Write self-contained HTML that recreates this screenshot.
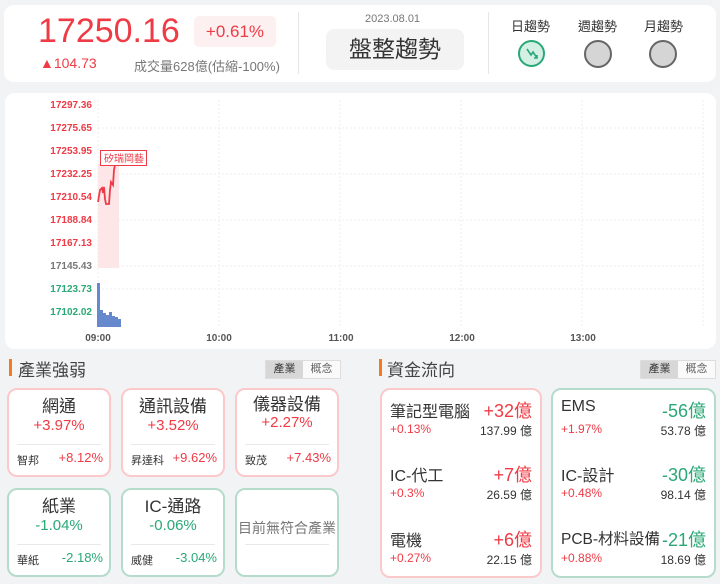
<!DOCTYPE html>
<html><head><meta charset="utf-8"><style>
*{margin:0;padding:0;box-sizing:border-box}
body{width:720px;height:584px;background:#f2f3f5;font-family:"Liberation Sans","Noto Sans CJK TC",sans-serif;position:relative;overflow:hidden;color:#333}
.a{position:absolute}
.card{position:absolute;background:#fff;border-radius:10px}
.red{color:#ef3b46}.grn{color:#2aa877}
.ic{position:absolute;background:#fff;border-radius:10px;border:2px solid #fcc9cb}
.ic.g{border-color:#b5dccb}
.ic .t{position:absolute;left:0;right:0;top:2px;text-align:center;font-size:17px;color:#333}
.ic .p{position:absolute;left:0;right:0;top:27px;text-align:center;font-size:15px}
.ic .hr{position:absolute;left:8px;right:8px;top:54px;border-top:1px solid #e8e8e8}
.ic .s{position:absolute;left:8px;top:62px;font-size:11px;color:#333}
.ic .v{position:absolute;right:6px;top:60px;font-size:13px}
.tog{position:absolute;width:76px;height:19px;border:1px solid #ddd;font-size:11px;display:flex}
.tog span{flex:1;text-align:center;line-height:17px;color:#666;background:#fafafa}
.tog span:first-child{background:#d7d7d7;color:#333}
.fc .n{position:absolute;left:8px;font-size:16px;color:#333}
.fc .m{position:absolute;right:8px;font-size:18px}
.fc .q{position:absolute;left:8px;font-size:12px;color:#ef3b46}
.fc .w{position:absolute;right:8px;font-size:12px;color:#333}
.ylab{position:absolute;left:40px;width:52px;text-align:right;font-size:10px;font-weight:bold}
</style></head><body>
<div class="card" style="left:4px;top:5px;width:712px;height:77px"></div>
<div class="a red" style="left:38px;top:12px;font-size:34px">17250.16</div>
<div class="a red" style="left:194px;top:16px;width:82px;height:31px;background:#fdf0f0;border-radius:5px;font-size:17px;text-align:center;line-height:31px">+0.61%</div>
<div class="a red" style="left:40px;top:55px;font-size:14px">▲104.73</div>
<div class="a" style="left:134px;top:56px;font-size:13px;color:#777">成交量628億(估縮-100%)</div>
<div class="a" style="left:298px;top:12px;width:1px;height:62px;background:#e6e6e6"></div>
<div class="a" style="left:365px;top:13px;font-size:11px;color:#777">2023.08.01</div>
<div class="a" style="left:326px;top:29px;width:138px;height:41px;background:#f3f3f3;border-radius:8px;font-size:23px;text-align:center;line-height:41px;color:#333">盤整趨勢</div>
<div class="a" style="left:488px;top:12px;width:1px;height:62px;background:#e6e6e6"></div>
<div class="a" style="left:511px;top:16px;font-size:13px">日趨勢</div>
<div class="a" style="left:578px;top:16px;font-size:13px">週趨勢</div>
<div class="a" style="left:644px;top:16px;font-size:13px">月趨勢</div>
<div class="a" style="left:518px;top:40px;width:27px;height:27px;border-radius:50%;border:2px solid #2aa877;background:#d4f0e4"></div>
<svg class="a" style="left:518px;top:40px" width="27" height="27"><path d="M9 9 L13 15 L15 12 L19 18 M16 18 H19 V15" stroke="#2aa877" stroke-width="1.6" fill="none"/></svg>
<div class="a" style="left:584px;top:40px;width:28px;height:28px;border-radius:50%;border:2px solid #666;background:#d5d5d5"></div>
<div class="a" style="left:649px;top:40px;width:28px;height:28px;border-radius:50%;border:2px solid #666;background:#d5d5d5"></div>

<div class="card" style="left:5px;top:93px;width:711px;height:256px"></div>
<svg class="a" style="left:0;top:0" width="720" height="350">
<g stroke="#eee" stroke-dasharray="2,2">
<line x1="98" y1="128" x2="705" y2="128"/><line x1="98" y1="174" x2="705" y2="174"/><line x1="98" y1="220" x2="705" y2="220"/><line x1="98" y1="266" x2="705" y2="266"/><line x1="98" y1="289" x2="705" y2="289"/>
<line x1="98" y1="100" x2="98" y2="328"/><line x1="219" y1="100" x2="219" y2="328"/><line x1="340" y1="100" x2="340" y2="328"/><line x1="461" y1="100" x2="461" y2="328"/><line x1="582" y1="100" x2="582" y2="328"/><line x1="703" y1="100" x2="703" y2="328"/>
</g>
<rect x="98" y="164" width="21" height="104" fill="#fde6e7"/>
<path d="M98 202 L100 190 L102 188 L103 193 L104 187 L105 199 L106 204 L109 204 L110 190 L111 182 L113 185 L114 170 L116 160" stroke="#ef3b46" stroke-width="1.8" fill="none"/>
<rect x="100.5" y="150.5" width="46" height="15" fill="#fff" stroke="#ef3b46"/>
<text x="104" y="162" font-size="10" fill="#ef3b46" font-family="Noto Sans CJK TC">矽瑞岡藝</text>
<g fill="#6688cc"><rect x="97" y="283" width="3" height="44"/><rect x="100" y="310" width="3" height="17"/><rect x="103" y="313" width="3" height="14"/><rect x="106" y="315" width="3" height="12"/><rect x="109" y="312" width="3" height="15"/><rect x="112" y="316" width="3" height="11"/><rect x="115" y="317" width="3" height="10"/><rect x="118" y="319" width="3" height="8"/></g>
<g font-size="10" fill="#555" font-weight="bold" text-anchor="middle" font-family="Liberation Sans"><text x="98" y="341">09:00</text><text x="219" y="341">10:00</text><text x="341" y="341">11:00</text><text x="462" y="341">12:00</text><text x="583" y="341">13:00</text></g>
</svg>
<div class="ylab red" style="top:100px">17297.36</div>
<div class="ylab red" style="top:123px">17275.65</div>
<div class="ylab red" style="top:146px">17253.95</div>
<div class="ylab red" style="top:169px">17232.25</div>
<div class="ylab red" style="top:192px">17210.54</div>
<div class="ylab red" style="top:215px">17188.84</div>
<div class="ylab red" style="top:238px">17167.13</div>
<div class="ylab" style="top:261px;color:#777">17145.43</div>
<div class="ylab grn" style="top:284px">17123.73</div>
<div class="ylab grn" style="top:307px">17102.02</div>

<div class="a" style="left:9px;top:359px;width:3px;height:17px;background:#f47920"></div>
<div class="a" style="left:18px;top:356px;font-size:17px;color:#444">產業強弱</div>
<div class="tog" style="left:265px;top:360px"><span>產業</span><span>概念</span></div>
<div class="ic" style="left:7px;top:388px;width:104px;height:89px"><div class="t">網通</div><div class="p red">+3.97%</div><div class="hr"></div><div class="s">智邦</div><div class="v red">+8.12%</div></div>
<div class="ic" style="left:121px;top:388px;width:104px;height:89px"><div class="t">通訊設備</div><div class="p red">+3.52%</div><div class="hr"></div><div class="s">昇達科</div><div class="v red">+9.62%</div></div>
<div class="ic" style="left:235px;top:388px;width:104px;height:89px"><div class="t" style="top:0px">儀器設備</div><div class="p red" style="top:24px">+2.27%</div><div class="hr"></div><div class="s">致茂</div><div class="v red">+7.43%</div></div>
<div class="ic g" style="left:7px;top:488px;width:104px;height:89px"><div class="t">紙業</div><div class="p grn">-1.04%</div><div class="hr"></div><div class="s">華紙</div><div class="v grn">-2.18%</div></div>
<div class="ic g" style="left:121px;top:488px;width:104px;height:89px"><div class="t">IC-通路</div><div class="p grn">-0.06%</div><div class="hr"></div><div class="s">威健</div><div class="v grn">-3.04%</div></div>
<div class="ic g" style="left:235px;top:488px;width:104px;height:89px"><div class="t" style="top:28px;font-size:14px;color:#777">目前無符合產業</div><div class="hr"></div></div>

<div class="a" style="left:379px;top:359px;width:3px;height:17px;background:#f47920"></div>
<div class="a" style="left:387px;top:356px;font-size:17px;color:#444">資金流向</div>
<div class="tog" style="left:640px;top:360px"><span>產業</span><span>概念</span></div>
<div class="ic fc" style="left:380px;top:388px;width:162px;height:190px">
<div class="n" style="top:8px">筆記型電腦</div><div class="m red" style="top:7px">+32億</div><div class="q" style="top:32px">+0.13%</div><div class="w" style="top:32px">137.99 億</div>
<div class="n" style="top:72px">IC-代工</div><div class="m red" style="top:71px">+7億</div><div class="q" style="top:96px">+0.3%</div><div class="w" style="top:96px">26.59 億</div>
<div class="n" style="top:137px">電機</div><div class="m red" style="top:136px">+6億</div><div class="q" style="top:161px">+0.27%</div><div class="w" style="top:161px">22.15 億</div></div>
<div class="ic g fc" style="left:551px;top:388px;width:165px;height:190px">
<div class="n" style="top:8px">EMS</div><div class="m grn" style="top:7px">-56億</div><div class="q" style="top:32px">+1.97%</div><div class="w" style="top:32px">53.78 億</div>
<div class="n" style="top:72px">IC-設計</div><div class="m grn" style="top:71px">-30億</div><div class="q" style="top:96px">+0.48%</div><div class="w" style="top:96px">98.14 億</div>
<div class="n" style="top:137px;font-size:15.5px">PCB-材料設備</div><div class="m grn" style="top:136px">-21億</div><div class="q" style="top:161px">+0.88%</div><div class="w" style="top:161px">18.69 億</div></div>
</body></html>
